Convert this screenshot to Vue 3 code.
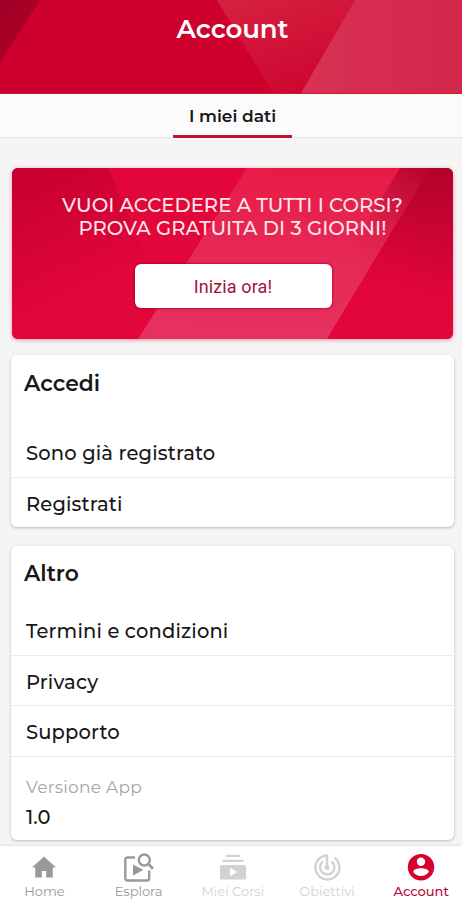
<script setup>
const accessRows = ['Sono già registrato', 'Registrati']
const otherRows = ['Termini e condizioni', 'Privacy', 'Supporto']
</script>

<template>
  <div class="screen">
    <header class="header">
      <svg class="art" viewBox="0 0 462 94" preserveAspectRatio="none" aria-hidden="true">
        <defs>
          <linearGradient id="hDark" x1="0" y1="0" x2="1" y2="1">
            <stop offset="0" stop-color="#a00026" />
            <stop offset="1" stop-color="#b60029" />
          </linearGradient>
          <linearGradient id="hMid" x1="0.2" y1="0" x2="0.7" y2="1">
            <stop offset="0" stop-color="#d5203f" />
            <stop offset="1" stop-color="#cd0530" />
          </linearGradient>
          <linearGradient id="hLight" x1="0" y1="0.5" x2="1" y2="0.5">
            <stop offset="0" stop-color="#d83253" />
            <stop offset="1" stop-color="#d3264b" />
          </linearGradient>
        </defs>
        <rect width="462" height="94" fill="#ce002e" />
        <path d="M0 0H40L0 64Z" fill="url(#hDark)" />
        <path d="M217 0H355L301 94H273Z" fill="url(#hMid)" />
        <path d="M355 0H462V94H301Z" fill="url(#hLight)" />
      </svg>
      <h1 class="title">Account</h1>
    </header>

    <nav class="tabs">
      <div class="tab"><span>I miei dati</span></div>
    </nav>

    <main class="content">
      <section class="promo">
        <svg class="art" viewBox="0 0 441 171" preserveAspectRatio="none" aria-hidden="true">
          <defs>
            <linearGradient id="pLeft" gradientUnits="userSpaceOnUse" x1="10" y1="0" x2="70" y2="130">
              <stop offset="0" stop-color="#c60031" />
              <stop offset="1" stop-color="#e3063b" />
            </linearGradient>
            <linearGradient id="pBand" x1="0.5" y1="0" x2="0.45" y2="1">
              <stop offset="0" stop-color="#e81b47" />
              <stop offset="0.6" stop-color="#e62b58" />
              <stop offset="1" stop-color="#e6315e" />
            </linearGradient>
            <linearGradient id="pRight" gradientUnits="userSpaceOnUse" x1="425" y1="0" x2="390" y2="125">
              <stop offset="0" stop-color="#b2022c" />
              <stop offset="1" stop-color="#e3063b" />
            </linearGradient>
            <linearGradient id="pShade" gradientUnits="userSpaceOnUse" x1="410" y1="0" x2="345" y2="95">
              <stop offset="0" stop-color="#b6042d" />
              <stop offset="1" stop-color="#d51d47" stop-opacity="0" />
            </linearGradient>
          </defs>
          <rect width="441" height="171" fill="#e3063b" />
          <path d="M0 0H96L170 171H0Z" fill="url(#pLeft)" />
          <path d="M235 0H418L315 171H126Z" fill="url(#pBand)" />
          <path d="M418 0H441V171H315Z" fill="url(#pRight)" />
          <path d="M388 0H418L350 113L330 96Z" fill="url(#pShade)" />
        </svg>
        <div class="promo-text">
          <span>VUOI ACCEDERE A TUTTI I CORSI?</span>
          <span>PROVA GRATUITA DI 3 GIORNI!</span>
        </div>
        <button class="cta">Inizia ora!</button>
      </section>

      <section class="card access">
        <h2>Accedi</h2>
        <div v-for="label in accessRows" :key="label" class="row">{{ label }}</div>
      </section>

      <section class="card other">
        <h2>Altro</h2>
        <div v-for="label in otherRows" :key="label" class="row">{{ label }}</div>
        <div class="version">
          <span class="version-label">Versione App</span>
          <span class="version-value">1.0</span>
        </div>
      </section>
    </main>

    <footer class="bottom">
      <div class="item">
        <svg width="32" height="30" viewBox="0 0 32 30"><path d="M16 3.500L28 14.500H24.800V24.500H18.200V18H13.800V24.500H7.200V14.500H4Z" fill="#999" /></svg>
        <span>Home</span>
      </div>
      <div class="item">
        <svg width="32" height="30" viewBox="0 0 32 30" fill="none" stroke="#999" stroke-width="2.400">
          <path d="M12 4.500H4.500Q2.300 4.500 2.300 6.700V25.300Q2.300 27.500 4.500 27.500H24Q26.200 27.500 26.200 25.300V17.500" />
          <circle cx="21.300" cy="7" r="5.500" />
          <path d="M25.300 11L30 15.700" stroke-width="2.800" />
          <path d="M10 11.500L20.500 17L10 22.500Z" fill="#999" stroke="none" />
        </svg>
        <span>Esplora</span>
      </div>
      <div class="item faded">
        <svg width="32" height="30" viewBox="0 0 32 30" fill="#d2d2d2">
          <path d="M9 1.800H23V4H9ZM5.500 6.800H26.500V9H5.500Z" />
          <path fill-rule="evenodd" d="M4.500 12H27.500Q29 12 29 13.500V25Q29 26.500 27.500 26.500H4.500Q3 26.500 3 25V13.500Q3 12 4.500 12ZM13 15V23L20.500 19Z" />
        </svg>
        <span>Miei Corsi</span>
      </div>
      <div class="item faded">
        <svg width="32" height="30" viewBox="0 0 32 30" fill="none" stroke="#d2d2d2" stroke-width="2.400">
          <path d="M23.500 4.800A12 12 0 1 1 16 2.500V14" />
          <path d="M20.500 8.500A7.200 7.200 0 1 1 12 8.500" />
          <circle cx="16" cy="14.500" r="2.600" fill="#d2d2d2" stroke="none" />
        </svg>
        <span>Obiettivi</span>
      </div>
      <div class="item active">
        <svg width="32" height="30" viewBox="0 0 32 30">
          <circle cx="16" cy="14.200" r="13.200" fill="#d7002f" />
          <circle cx="16" cy="8.800" r="4.200" fill="#fff" />
          <path d="M8.200 19C8.200 16.200 13 15.200 16 15.200S23.800 16.200 23.800 19C22 21.800 19 23 16 23S10 21.800 8.200 19Z" fill="#fff" />
        </svg>
        <span>Account</span>
      </div>
    </footer>
  </div>
</template>

<style>
body { margin: 0; background: #f5f5f5; }
</style>

<style scoped>
* { box-sizing: border-box; }
.screen {
  width: 462px;
  height: 900px;
  overflow: hidden;
  display: flex;
  flex-direction: column;
  background: #f5f5f5;
  color: #171717;
  font-family: Montserrat, Inter, "Open Sans", sans-serif;
}
.art { position: absolute; inset: 0; width: 100%; height: 100%; z-index: -1; }
.header {
  position: relative;
  isolation: isolate;
  flex: none;
  height: 94px;
  border-bottom: 1px solid #c91d2c;
  text-align: center;
}
.title {
  margin: 0;
  padding: 13px 0 0 3px;
  font-size: 26px;
  line-height: 32px;
  font-weight: 600;
  letter-spacing: -0.1px;
  color: #fff;
}
.tabs {
  flex: none;
  height: 44px;
  background: #fbfbfb;
  border-bottom: 1px solid #e5e5e5;
  display: flex;
  justify-content: center;
}
.tab {
  width: 119px;
  height: 44px;
  margin-left: 3px;
  border-bottom: 3px solid #c3122f;
  border-radius: 1px;
  text-align: center;
  font-size: 17px;
  font-weight: 600;
  line-height: 45px;
}
.content { flex: 1; min-height: 0; padding: 30px 8px 0 11px; }
.promo {
  position: relative;
  isolation: isolate;
  overflow: hidden;
  width: 441px;
  height: 171px;
  margin-left: 1px;
  border-radius: 6px;
  display: flex;
  flex-direction: column;
  align-items: center;
  box-shadow: 0 1px 4px rgba(200, 0, 50, 0.4);
}
.promo-text {
  display: flex;
  flex-direction: column;
  align-items: center;
  margin-top: 26px;
  color: #ffe3e9;
  font-size: 19.700px;
  line-height: 23px;
  font-weight: 500;
  white-space: nowrap;
}
.cta {
  margin: 24px 0 0 1px;
  width: 197px;
  height: 44px;
  padding: 2px 0 0;
  border: 0;
  border-radius: 6px;
  background: #fff;
  color: #a3123f;
  font: 400 18px/42px Roboto, sans-serif;
  letter-spacing: 0.1px;
  box-shadow: 0 0 2px 1px rgba(150, 0, 45, 0.6);
}
.card {
  width: 443px;
  background: #fff;
  border-radius: 6px;
  box-shadow: 0 1px 3px rgba(0, 0, 0, 0.25);
}
.access { height: 172px; margin-top: 16px; }
.other { height: 294px; margin-top: 19px; }
.card h2 {
  margin: 0;
  padding: 13px 0 0 13px;
  font-size: 21.800px;
  line-height: 30px;
  font-weight: 600;
}
.access h2 { height: 72px; }
.other h2 { height: 59px; line-height: 29px; }
.row {
  height: 51px;
  padding-left: 15px;
  font-size: 19.500px;
  font-weight: 500;
  line-height: 52px;
  letter-spacing: 0.150px;
  border-bottom: 1px solid #ebebeb;
}
.access .row:last-child { border: 0; }
.other .row:nth-child(3) { height: 50px; }
.version { display: flex; flex-direction: column; padding: 19px 0 0 15px; }
.version-label { font-size: 17px; line-height: 22px; color: #a6a6a6; letter-spacing: 0.250px; }
.version-value { font-size: 19.500px; font-weight: 500; line-height: 24px; margin-top: 7px; }
.bottom {
  flex: none;
  height: 54px;
  position: relative;
  background: #fff;
  display: flex;
  box-shadow: 0 -1px 2px rgba(0, 0, 0, 0.08);
}
.item {
  flex: none;
  width: 94.200px;
  display: flex;
  flex-direction: column;
  align-items: center;
  padding-top: 7px;
  font-size: 13px;
  line-height: 17px;
  color: #999;
  white-space: nowrap;
}
.item:first-child { margin-left: -2.700px; }
.faded { color: #d2d2d2; }
.active { color: #b30935; font-weight: 500; }
</style>
